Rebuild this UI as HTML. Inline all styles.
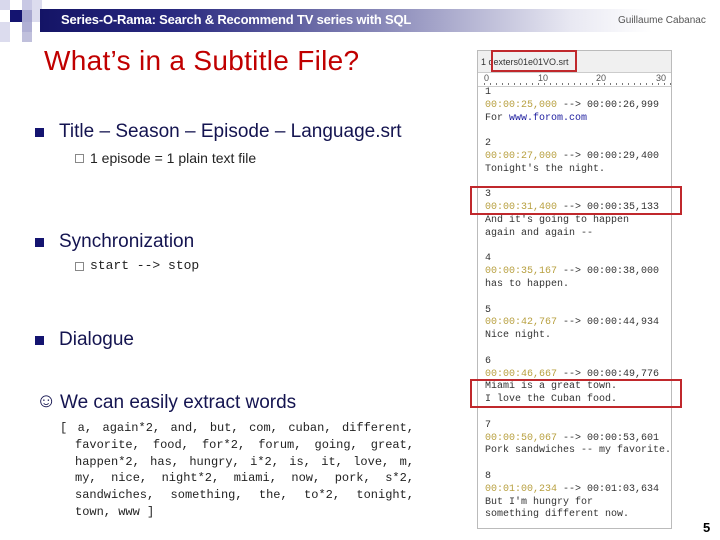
<!DOCTYPE html>
<html><head><meta charset="utf-8"><style>
*{margin:0;padding:0;box-sizing:border-box}
body{width:720px;height:540px;background:#fff;position:relative;overflow:hidden;font-family:"Liberation Sans",sans-serif}
.a{position:absolute}
.sq{position:absolute}
.hdr{position:absolute;left:40px;top:9px;width:680px;height:23px;background:linear-gradient(90deg,#141466 0%,#2a2a80 20%,#8888b8 50%,#e8e8f2 78%,#fff 90%)}
.ht{position:absolute;left:61px;top:12px;color:#fff;font-size:13px;font-weight:bold;letter-spacing:-0.2px}
.au{position:absolute;left:618px;top:15px;color:#555;font-size:10px}
.title{position:absolute;left:44px;top:45px;color:#c00000;font-size:28px;letter-spacing:0.3px}
.b{position:absolute;color:#141450;font-size:19px}
.bl{position:absolute;width:9px;height:9px;background:#141470}
.sb{position:absolute;width:9px;height:9px;border:1px solid #888}
.mono{font-family:"Liberation Mono",monospace}
.panel{position:absolute;left:477px;top:50px;width:195px;height:479px;border:1px solid #bbb;background:#fff;overflow:hidden}
.tab{height:22px;background:#f0f0f0;border-bottom:1px solid #ccc;font-size:9px;color:#333;padding:6px 0 0 3px}
.ruler{height:14px;border-bottom:1px solid #ccc;position:relative;font-size:9px;color:#555}
.lines{font-family:"Liberation Mono",monospace;font-size:10px;line-height:12.8px;color:#333;padding:0 0 0 7px;white-space:pre}
.y{color:#b8a040}
.box{position:absolute;border:2px solid #c0282c}
.words{position:absolute;left:60px;top:420px;width:354px;font-family:"Liberation Mono",monospace;font-size:12px;line-height:16.8px;color:#222;white-space:nowrap}
.words div{text-align:justify;text-align-last:justify}
</style></head><body>
<div class="sq" style="left:0;top:0;width:10px;height:10px;background:#d8d8ec"></div>
<div class="sq" style="left:22px;top:0;width:10px;height:10px;background:#c8c8e4"></div>
<div class="sq" style="left:32px;top:0;width:10px;height:22px;background:#dcdcee"></div>
<div class="sq" style="left:10px;top:10px;width:12px;height:12px;background:#141470"></div>
<div class="sq" style="left:22px;top:10px;width:10px;height:12px;background:#a8a8d0"></div>
<div class="sq" style="left:0;top:22px;width:10px;height:20px;background:#dcdcee"></div>
<div class="sq" style="left:22px;top:22px;width:10px;height:10px;background:#b0b0d4"></div>
<div class="sq" style="left:22px;top:32px;width:10px;height:10px;background:#c0c0dc"></div>
<div class="hdr"></div>
<div class="ht">Series-O-Rama: Search &amp; Recommend TV series with SQL</div>
<div class="au">Guillaume Cabanac</div>
<div class="title">What’s in a Subtitle File?</div>

<div class="bl" style="left:35px;top:128px"></div>
<div class="b" style="left:59px;top:121px">Title – Season – Episode – Language.srt</div>
<div class="sb" style="left:75px;top:154px"></div>
<div class="a" style="left:90px;top:150px;font-size:14px;color:#222">1 episode = 1 plain text file</div>

<div class="bl" style="left:35px;top:238px"></div>
<div class="b" style="left:59px;top:231px">Synchronization</div>
<div class="sb" style="left:75px;top:262px"></div>
<div class="a mono" style="left:90px;top:258px;font-size:13px;color:#222">start --&gt; stop</div>

<div class="bl" style="left:35px;top:336px"></div>
<div class="b" style="left:59px;top:329px">Dialogue</div>

<div class="a" style="left:36px;top:390px;font-size:20px;color:#141450">☺</div>
<div class="b" style="left:60px;top:392px">We can easily extract words</div>
<div class="words">
<div>[ a, again*2, and, but, com, cuban, different,</div>
<div style="padding-left:15px">favorite, food, for*2, forum, going, great,</div>
<div style="padding-left:15px">happen*2, has, hungry, i*2, is, it, love, m,</div>
<div style="padding-left:15px">my, nice, night*2, miami, now, pork, s*2,</div>
<div style="padding-left:15px">sandwiches, something, the, to*2, tonight,</div>
<div style="padding-left:15px;text-align-last:left">town, www ]</div>
</div>

<div class="panel">
<div class="tab">1 dexters01e01VO.srt</div>
<div class="ruler"><span class="a" style="left:6px;top:0">0</span><span class="a" style="left:60px;top:0">10</span><span class="a" style="left:118px;top:0">20</span><span class="a" style="left:178px;top:0">30</span><div class="a" style="left:6px;right:0;bottom:1px;height:2px;background:repeating-linear-gradient(90deg,#777 0 1px,transparent 1px 6px)"></div></div>
<div class="lines">1
<span class="y">00:00:25,000</span> --&gt; 00:00:26,999
For <span style="color:#2020a0">www.forom.com</span>

2
<span class="y">00:00:27,000</span> --&gt; 00:00:29,400
Tonight's the night.

3
<span class="y">00:00:31,400</span> --&gt; 00:00:35,133
And it's going to happen
again and again --

4
<span class="y">00:00:35,167</span> --&gt; 00:00:38,000
has to happen.

5
<span class="y">00:00:42,767</span> --&gt; 00:00:44,934
Nice night.

6
<span class="y">00:00:46,667</span> --&gt; 00:00:49,776
Miami is a great town.
I love the Cuban food.

7
<span class="y">00:00:50,067</span> --&gt; 00:00:53,601
Pork sandwiches -- my favorite.

8
<span class="y">00:01:00,234</span> --&gt; 00:01:03,634
But I'm hungry for
something different now.</div>
</div>
<div class="box" style="left:491px;top:50px;width:86px;height:22px"></div>
<div class="box" style="left:470px;top:186px;width:212px;height:29px"></div>
<div class="box" style="left:470px;top:379px;width:212px;height:29px"></div>
<div class="a" style="left:703px;top:520px;font-size:13px;font-weight:bold;color:#000">5</div>
</body></html>
